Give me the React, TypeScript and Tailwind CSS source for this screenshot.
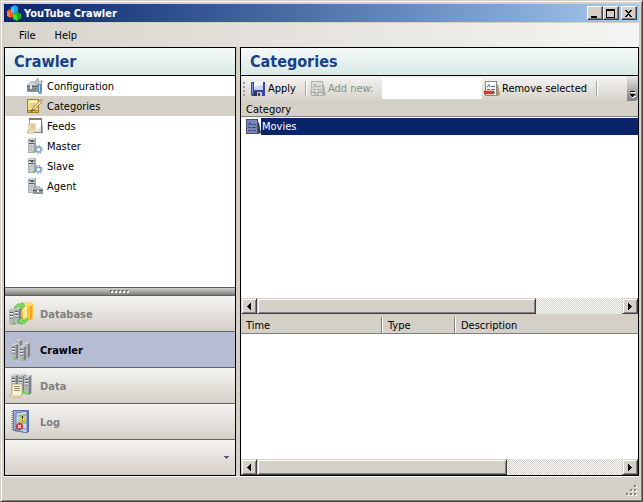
import React, { useId } from "react";

function LogoIcon() {
  return (
    <svg className="size-4 shrink-0" viewBox="0 0 16 16" aria-hidden="true">
      <path d="M1 6l3-2 4 2v5l-3 2-4-2z" fill="#f4511e" />
      <path d="M1 6l3 1v5l-3-1z" fill="#ff7a3a" />
      <path d="M5 2l4-2 3 2 0 5-3 2-4-2z" fill="#12a5f4" />
      <path d="M5 2l3 1v5l-3-1z" fill="#4cc3ff" />
      <path d="M7 9l4-2 4 2v4l-4 3-4-2z" fill="#14b81d" />
      <path d="M7 9l4 1v5l-4-1z" fill="#3fe03a" />
    </svg>
  );
}

function ToolboxIcon() {
  return (
    <svg className="size-4 shrink-0" viewBox="0 0 16 16" aria-hidden="true">
      <path d="M3 4h7v2" fill="none" stroke="#8b9399" />
      <path d="M2 5h10l1 2v7H0V7z" fill="#8f989e" />
      <path d="M2 5h9l1 2H0z" fill="#ccd2d6" />
      <path d="M0 8h11v1H0z" fill="#59636a" />
      <path d="M1 10h9v3H1z" fill="#7d878e" />
      <path d="M3 7h2v4H3z" fill="#dfe4e8" />
      <path d="M11 0v3l2 1 2-2v3l-2 2h-2L9 5V2z" fill="#c3c9cd" stroke="#858e94" strokeWidth=".6" />
      <path d="M11 6h4v8l-1 2h-2l-1-2z" fill="#5d8dbb" />
      <path d="M12 7h1v7h-1z" fill="#c3dcf2" />
    </svg>
  );
}

function NotepadIcon() {
  return (
    <svg className="size-4 shrink-0" viewBox="0 0 16 16" aria-hidden="true">
      <path d="M0 1h12v14H0z" fill="#a08220" />
      <path d="M1 2h10v10H1z" fill="#efe08a" />
      <path d="M2 3h8v2H2z" fill="#fff5bf" />
      <path d="M3 6h5M3 8h4" stroke="#d8c56a" />
      <path d="M1 13h10v1H1z" fill="#d8bd45" />
      <path d="M13 2l2 2-8 8-3 2 1-3z" fill="#f6dca0" stroke="#806a40" strokeWidth=".7" />
      <path d="M13 1l1-1 2 2-1 2z" fill="#e0a58c" />
      <path d="M4 14l1-3 2 1z" fill="#5d5340" />
    </svg>
  );
}

function FeedsIcon() {
  return (
    <svg className="size-4 shrink-0" viewBox="0 0 16 16" aria-hidden="true">
      <path d="M2 0h13l1 15H3z" fill="#858585" />
      <path d="M3 2h11v12H3z" fill="#fff" />
      <path d="M2 0h13v2H2z" fill="#9c7063" />
      <path d="M9 14l5-6v6z" fill="#dcdcdc" />
      <path d="M2 6h6v7l-1 2H0v-2h2z" fill="#f9ecc2" stroke="#b39a5f" strokeWidth=".7" />
      <path d="M4 8h3M4 10h3M3 12h3" stroke="#c5ad72" />
    </svg>
  );
}

function ServerIcon({ badge }: { badge: "gear" | "toolbox" }) {
  return (
    <svg className="size-4 shrink-0" viewBox="0 0 16 16" aria-hidden="true">
      <path d="M1 1l1-1h7v14l-2 1H1z" fill="#a9b0b4" />
      <path d="M2 1h5v13H2z" fill="#c9ced1" />
      <path d="M7 1l2-1v14l-2 1z" fill="#9aa2a7" />
      <path d="M2 1h6" stroke="#e4e7e9" />
      <path d="M2 2.500h5M2 5.500h5" stroke="#566066" />
      <path d="M4 3h2v1H4z" fill="#30383c" />
      <path d="M2 8.500h4M2 11.500h3" stroke="#b1b8bc" />
      {badge === "gear" ? (
        <>
          <path d="M5 13h2v2H5z" fill="#7ed85a" />
          <circle cx="11.500" cy="11.500" r="3.700" fill="none" stroke="#8aa5c2" strokeWidth="1.400" strokeDasharray="1.450 1.450" />
          <circle cx="11.500" cy="11.500" r="2.500" fill="#e7f0f8" stroke="#86a2c1" strokeWidth="1.300" />
          <path d="M11 10h1v3h-1zM10 11h3v1h-3z" fill="#fff" />
        </>
      ) : (
        <>
          <path d="M9 10V9h4v1" fill="none" stroke="#7b868d" />
          <path d="M6 10h9l1 1v5H6z" fill="#8d979e" />
          <path d="M7 10h8v1H7z" fill="#c6cdd1" />
          <path d="M6 12.500h10" stroke="#56616a" />
          <path d="M10 12h2v2h-2z" fill="#e5e8ea" />
        </>
      )}
    </svg>
  );
}

function Tower({ x, y, h = 16 }: { x: number; y: number; h?: number }) {
  return (
    <g transform={`translate(${x} ${y})`}>
      <path d={`M0 2l3-2h5v${h - 3}l-3 3-5-1z`} fill="#a5a9ac" />
      <path d={`M5 2l3-2v${h - 3}l-3 3z`} fill="#7c8286" />
      <path d={`M7 1l1-1v${h - 3}l-1 1z`} fill="#b8bcbf" />
      <path d={`M0 2h4v${h - 3}H0z`} fill="#b4b8bb" />
      <path d="M0 2l3-2h5L5 2z" fill="#cfd2d4" />
      <path d="M1 4.500h3M1 7.500h3" stroke="#565e63" />
      <path d="M1 5.500h3M1 8.500h3" stroke="#eef0f1" />
      <path d="M1 10.500h3" stroke="#8b9297" />
      <path d={`M3 ${h - 3}h2v2H3z`} fill="#62dd3c" />
    </g>
  );
}

function DatabaseIcon() {
  return (
    <svg className="size-6 shrink-0" viewBox="0 0 24 24" aria-hidden="true">
      <Tower x={0} y={6} h={17} />
      <Tower x={5} y={5} h={17} />
      <path d="M13 2c0-2 11-2 11 0v14c0 3-11 3-11 0z" fill="#fbc334" />
      <path d="M14 4h4v13c-2 0-4-1-4-2z" fill="#ffe99a" />
      <path d="M21 3h2v14l-2 1z" fill="#f3aa1a" />
      <ellipse cx="18.500" cy="2.500" rx="5" ry="1.500" fill="#ffdf75" />
      <path d="M5 6c2-4 5-5 8-4V0l3 4-4 4V5c-3-1-4 0-5 1z" fill="#7bdc5d" stroke="#3fae32" strokeWidth=".6" />
      <path d="M19 17c-1 4-4 5-6 4v2l-4-4 4-4v3c3 1 4 0 4-2z" fill="#7bdc5d" stroke="#3fae32" strokeWidth=".6" />
    </svg>
  );
}

function CrawlerIcon() {
  return (
    <svg className="size-6 shrink-0" viewBox="0 0 24 24" aria-hidden="true">
      <Tower x={6} y={1} h={17} />
      <Tower x={14} y={4} h={16} />
      <Tower x={2} y={5} h={17} />
      <Tower x={10} y={7} h={16} />
    </svg>
  );
}

function DataIcon() {
  return (
    <svg className="size-6 shrink-0" viewBox="0 0 24 24" aria-hidden="true">
      <Tower x={2} y={0} h={18} />
      <Tower x={9} y={0} h={18} />
      <Tower x={15} y={1} h={20} />
      <path d="M12 20h5v-2h-5z" fill="#62dd3c" />
      <path d="M3 10h10v10l-2 3H1l-1-2 3-1z" fill="#fff6da" stroke="#b59e6a" strokeWidth=".8" />
      <path d="M5 12.500h6M5 14.500h6M5 16.500h6" stroke="#9a8c66" />
      <path d="M1 21h9v2H1z" fill="#e6d5a3" />
    </svg>
  );
}

function LogIcon() {
  return (
    <svg className="size-6 shrink-0" viewBox="0 0 24 24" aria-hidden="true">
      <path d="M4 0h16v22l-3 1-13-2z" fill="#5b6ea8" />
      <path d="M5 1h13v2L5 21z" fill="#9db5de" />
      <path d="M7 3l11-2v22L7 20z" fill="#cbdcf5" stroke="#5f76b3" />
      <path d="M9 6l8-1M9 13h8M9 18l8 1" stroke="#93afde" strokeWidth="2" />
      <path d="M3.500 1v20" stroke="#858585" strokeWidth="2" strokeDasharray="1 1" />
      <path d="M13.500 4l4 8h-8z" fill="#ffe21c" stroke="#d1ae00" strokeLinejoin="round" />
      <path d="M13 6h1v3h-1zM13 10h1v1h-1z" fill="#222" />
      <circle cx="10.500" cy="16.500" r="3.500" fill="#d0282e" />
      <path d="M9 15l3 3m0-3l-3 3" stroke="#fff" strokeWidth="1.200" />
    </svg>
  );
}

function SaveIcon() {
  return (
    <svg className="size-4 shrink-0" viewBox="0 0 16 16" aria-hidden="true">
      <path d="M1 1h14v14H2l-1-1z" fill="#3b45a8" />
      <path d="M2 2h1v11H2z" fill="#8496ea" />
      <path d="M4 1h9v8H4z" fill="#f2f6ff" />
      <path d="M4 6l9-2v5H4z" fill="#c8d5ef" />
      <path d="M4 11h8v4H4z" fill="#2e3844" />
      <path d="M7 11h5v4H7z" fill="#c9ced2" />
      <path d="M8 12h2v3H8z" fill="#35435a" />
    </svg>
  );
}

function BookIcon({ kind }: { kind: "add" | "remove" | "item" }) {
  const c =
    kind === "remove"
      ? { edge: "#8b8b86", page: "#fff", ink: "#4569b5", side: "#b9954b" }
      : kind === "item"
        ? { edge: "#4b506b", page: "#8088ad", ink: "#2c4e9d", side: "#343b52" }
        : { edge: "#b4b4b2", page: "#dedcd8", ink: "#a4a4a4", side: "#b4b2ae" };
  return (
    <svg className="size-4 shrink-0" viewBox="0 0 16 16" aria-hidden="true">
      <path d="M12 2l2 2 2 10-3 1z" fill={c.side} />
      <path d="M1 0h12v15H1z" fill={c.edge} />
      <path d="M2 1h10v13H2z" fill={c.page} />
      <path d="M3 6.500l2-3 1 3M7 5.500h4M3 8.500h3M7 8.500h4M3 11.500h3M7 11.500h4" fill="none" stroke={c.ink} />
      {kind === "add" && <path d="M0 11h5v3h3v-3h4" fill="none" stroke="#a2a2a2" />}
      {kind === "remove" && <path d="M0 10h10v3H0z" fill="#e63b27" stroke="#b83028" strokeWidth=".6" />}
    </svg>
  );
}

function Arrow({ dir }: { dir: "left" | "right" }) {
  return (
    <svg className="h-[7px] w-1" viewBox="0 0 4 7" shapeRendering="crispEdges" aria-hidden="true">
      <path d={dir === "left" ? "M4 0v7L0 3.500z" : "M0 0v7l4-3.500z"} fill="#000" />
    </svg>
  );
}

const raised =
  "border border-t-[#d4d0c8] border-l-[#d4d0c8] border-r-[#404040] border-b-[#404040] bg-[#d4d0c8] shadow-[inset_1px_1px_0_#fff,inset_-1px_-1px_0_#808080]";

function HScroll({ thumb, label }: { thumb: string; label: string }) {
  return (
    <div className="flex h-4 shrink-0 bg-[repeating-conic-gradient(#fff_0_25%,#d4d0c8_0_50%)] bg-[length:2px_2px]" role="group" aria-label={label}>
      <button aria-label="Scroll left" className={`flex w-4 shrink-0 items-center justify-center ${raised}`}>
        <Arrow dir="left" />
      </button>
      <div className="flex min-w-0 flex-1">
        <div className={`h-full ${thumb} ${raised}`} />
      </div>
      <button aria-label="Scroll right" className={`flex w-4 shrink-0 items-center justify-center ${raised}`}>
        <Arrow dir="right" />
      </button>
    </div>
  );
}

function PanelHeader({ children }: { children: React.ReactNode }) {
  return (
    <h2 className="flex h-7 shrink-0 items-center border-b border-black bg-linear-to-b from-[#f5faf9] to-[#d9e9e6] px-[9px] pt-px text-[16px] leading-5 font-bold text-[#15428b]">
      {children}
    </h2>
  );
}

function CaptionButton({ label, children, className = "" }: { label: string; children: React.ReactNode; className?: string }) {
  return (
    <button
      aria-label={label}
      className={`flex h-[14px] w-4 items-center justify-center border border-t-white border-l-white border-r-[#404040] border-b-[#404040] bg-[#d4d0c8] shadow-[inset_-1px_-1px_0_#808080] ${className}`}
    >
      <svg className="h-[9px] w-[10px]" viewBox="0 0 10 9" shapeRendering="crispEdges" aria-hidden="true">
        {children}
      </svg>
    </button>
  );
}

const treeItems = [
  { name: "Configuration", icon: <ToolboxIcon /> },
  { name: "Categories", icon: <NotepadIcon />, selected: true },
  { name: "Feeds", icon: <FeedsIcon /> },
  { name: "Master", icon: <ServerIcon badge="gear" /> },
  { name: "Slave", icon: <ServerIcon badge="gear" /> },
  { name: "Agent", icon: <ServerIcon badge="toolbox" /> },
];

const sections = [
  { name: "Database", icon: <DatabaseIcon /> },
  { name: "Crawler", icon: <CrawlerIcon />, active: true },
  { name: "Data", icon: <DataIcon /> },
  { name: "Log", icon: <LogIcon /> },
];

function Sidebar() {
  return (
    <aside className="flex w-[232px] shrink-0 flex-col border border-black bg-white">
      <PanelHeader>Crawler</PanelHeader>
      <ul className="min-h-0 flex-1">
        {treeItems.map((item) => (
          <li key={item.name}>
            <button className={`flex h-5 w-full items-center gap-1 pl-[22px] ${item.selected ? "bg-[#d4d0c8]" : ""}`}>
              {item.icon}
              {item.name}
            </button>
          </li>
        ))}
      </ul>
      <div className="flex h-[9px] items-center justify-center gap-[2px] border-y border-[#606060] bg-linear-to-b from-[#cfcfcc] to-[#7e7e7b]">
        {[0, 1, 2, 3, 4].map((dot) => (
          <span key={dot} className="size-[2px] bg-[#f4f4f4] shadow-[-1px_-1px_0_#606060]" />
        ))}
      </div>
      <nav>
        {sections.map((section) => (
          <button
            key={section.name}
            className={`flex h-9 w-full items-center gap-[7px] border-b border-[#606060] pt-px pl-1 text-[11px] font-bold ${
              section.active ? "bg-[#b6bdd2] text-black" : "bg-linear-to-b from-[#f5f4f2] to-[#d4d0c8] text-[#808080]"
            }`}
          >
            {section.icon}
            {section.name}
          </button>
        ))}
      </nav>
      <div className="flex h-[35px] items-center justify-end bg-linear-to-b from-[#f5f4f2] to-[#d4d0c8] pr-[2px] pb-px">
        <button aria-label="Configure buttons" className="p-1">
          <svg className="h-[3px] w-[5px]" viewBox="0 0 5 3" shapeRendering="crispEdges" aria-hidden="true">
            <path d="M0 0h5v1H4v1H3v1H2V2H1V1H0z" fill="#595f7a" />
          </svg>
        </button>
      </div>
    </aside>
  );
}

function Separator() {
  return <span className="h-[15px] w-px bg-[#a6a6a6] shadow-[1px_0_0_#fff]" />;
}

function Toolbar() {
  const id = useId();
  return (
    <div className="flex h-[25px] shrink-0 bg-linear-to-b from-[#f5f4f2] to-[#d6d2ca]" role="toolbar">
      <div className="flex flex-1 items-center">
        <span className="ml-[2px] h-[14px] w-[2px] bg-[repeating-linear-gradient(#a09d97_0_2px,transparent_2px_4px)]" />
        <button className="ml-[5px] flex items-center gap-[2px]">
          <SaveIcon />
          Apply
        </button>
        <span className="ml-[9px] flex">
          <Separator />
        </span>
        <label htmlFor={id} className="ml-1 flex items-center gap-[2px] text-[#8d8d8d]">
          <BookIcon kind="add" />
          Add new:
        </label>
        <input id={id} className="ml-auto h-[21px] w-[100px] bg-white px-1 outline-none" />
        <button className="ml-[2px] flex w-[112px] items-center gap-[2px] whitespace-nowrap">
          <BookIcon kind="remove" />
          Remove selected
        </button>
        <span className="mr-[30px] flex">
          <Separator />
        </span>
      </div>
      <button aria-label="Toolbar options" className="flex w-[11px] items-end justify-center rounded-br-sm bg-linear-to-b from-[#e8e7e4] to-[#808080] pb-[3px]">
        <svg className="h-[7px] w-[6px]" viewBox="0 0 6 7" shapeRendering="crispEdges" aria-hidden="true">
          <path d="M1 1h5v1H1zM2 6h2V5h2v1H4v1H2z" fill="#fff" />
          <path d="M0 0h5v1H0zM0 3h5v1H4v1H3v1H2V5H1V4H0z" fill="#000" />
        </svg>
      </button>
    </div>
  );
}

function Content() {
  return (
    <main className="flex min-w-0 flex-1 flex-col border border-black bg-white">
      <PanelHeader>Categories</PanelHeader>
      <Toolbar />
      <div className="min-h-0 flex-1">
        <table className="w-full border-separate border-spacing-0">
          <thead>
            <tr className="h-4 bg-[#d4d0c8]">
              <th className="border-b border-[#808080] px-[5px] py-0 pt-[2px] text-left leading-[13px] font-normal">Category</th>
            </tr>
          </thead>
          <tbody>
            <tr>
              <td className="p-0 pt-px pl-1">
                <div className="flex h-[17px] items-center">
                  <BookIcon kind="item" />
                  <span className="flex h-full flex-1 items-center bg-[#0a246a] pl-px text-white">Movies</span>
                </div>
              </td>
            </tr>
          </tbody>
        </table>
      </div>
      <HScroll thumb="w-[calc(100%-86px)]" label="Scroll categories" />
      <div className="h-[3px] shrink-0 bg-[#d4d0c8]" />
      <div className="h-[142px] shrink-0">
        <table className="w-full table-fixed border-separate border-spacing-0">
          <thead>
            <tr className="h-[17px] bg-[#d4d0c8] text-left">
              <th className="w-[141px] border-r border-b border-[#808080] px-[5px] py-0 pt-[2px] leading-[14px] font-normal">Time</th>
              <th className="w-[73px] border-r border-b border-[#808080] px-[6px] py-0 pt-[2px] leading-[14px] font-normal shadow-[inset_1px_0_0_#fff]">Type</th>
              <th className="border-b border-[#808080] px-[6px] py-0 pt-[2px] leading-[14px] font-normal shadow-[inset_1px_0_0_#fff]">Description</th>
            </tr>
          </thead>
        </table>
      </div>
      <HScroll thumb="w-[calc(100%-115px)]" label="Scroll log" />
    </main>
  );
}

export default function App() {
  return (
    <div className="flex h-screen w-full flex-col border border-t-[#d4d0c8] border-r-[#404040] border-b-[#404040] border-l-[#d4d0c8] bg-[#d4d0c8] pt-[3px] pr-[3px] pb-px pl-[3px] font-['DejaVu_Sans_Condensed','DejaVu_Sans',sans-serif] text-[11px] leading-[13px] text-black shadow-[inset_1px_1px_0_#fff,inset_-1px_-1px_0_#808080]">
      <header className="flex h-[18px] shrink-0 items-center bg-linear-to-r from-[#0a246a] to-[#a6caf0] pr-[2px] pl-[2px]">
        <LogoIcon />
        <h1 className="ml-[2px] flex-1 text-[11px] font-bold text-white">YouTube Crawler</h1>
        <CaptionButton label="Minimize">
          <path d="M1 7h6v2H1z" />
        </CaptionButton>
        <CaptionButton label="Maximize">
          <path d="M0 0h9v9H0zM1 2v6h7V2z" fillRule="evenodd" />
        </CaptionButton>
        <CaptionButton label="Close" className="ml-[2px]">
          <path d="M1 1h2v1h1v1h1V2h1V1h2v1H7v1H6v1H5v1h1v1h1v1h1v1H6V7H5V6H4v1H3v1H1V7h1V6h1V5h1V4H3V3H2V2H1z" />
        </CaptionButton>
      </header>
      <nav className="mt-px flex h-6 shrink-0 items-center gap-[19px] bg-linear-to-r from-[#d8d4cc] to-[#f5f4f2] pl-[15px]">
        <button>File</button>
        <button>Help</button>
      </nav>
      <div className="flex min-h-0 flex-1 gap-1">
        <Sidebar />
        <Content />
      </div>
      <footer className="flex h-6 shrink-0 items-end justify-end border-t border-white pr-[2px] pb-1">
        <svg className="size-[11px]" viewBox="0 0 11 11" shapeRendering="crispEdges" aria-hidden="true">
          <path d="M9 1h2v2H9zM5 5h2v2H5zM9 5h2v2H9zM1 9h2v2H1zM5 9h2v2H5zM9 9h2v2H9z" fill="#fff" />
          <path d="M8 0h2v2H8zM4 4h2v2H4zM8 4h2v2H8zM0 8h2v2H0zM4 8h2v2H4zM8 8h2v2H8z" fill="#808080" />
        </svg>
      </footer>
    </div>
  );
}
